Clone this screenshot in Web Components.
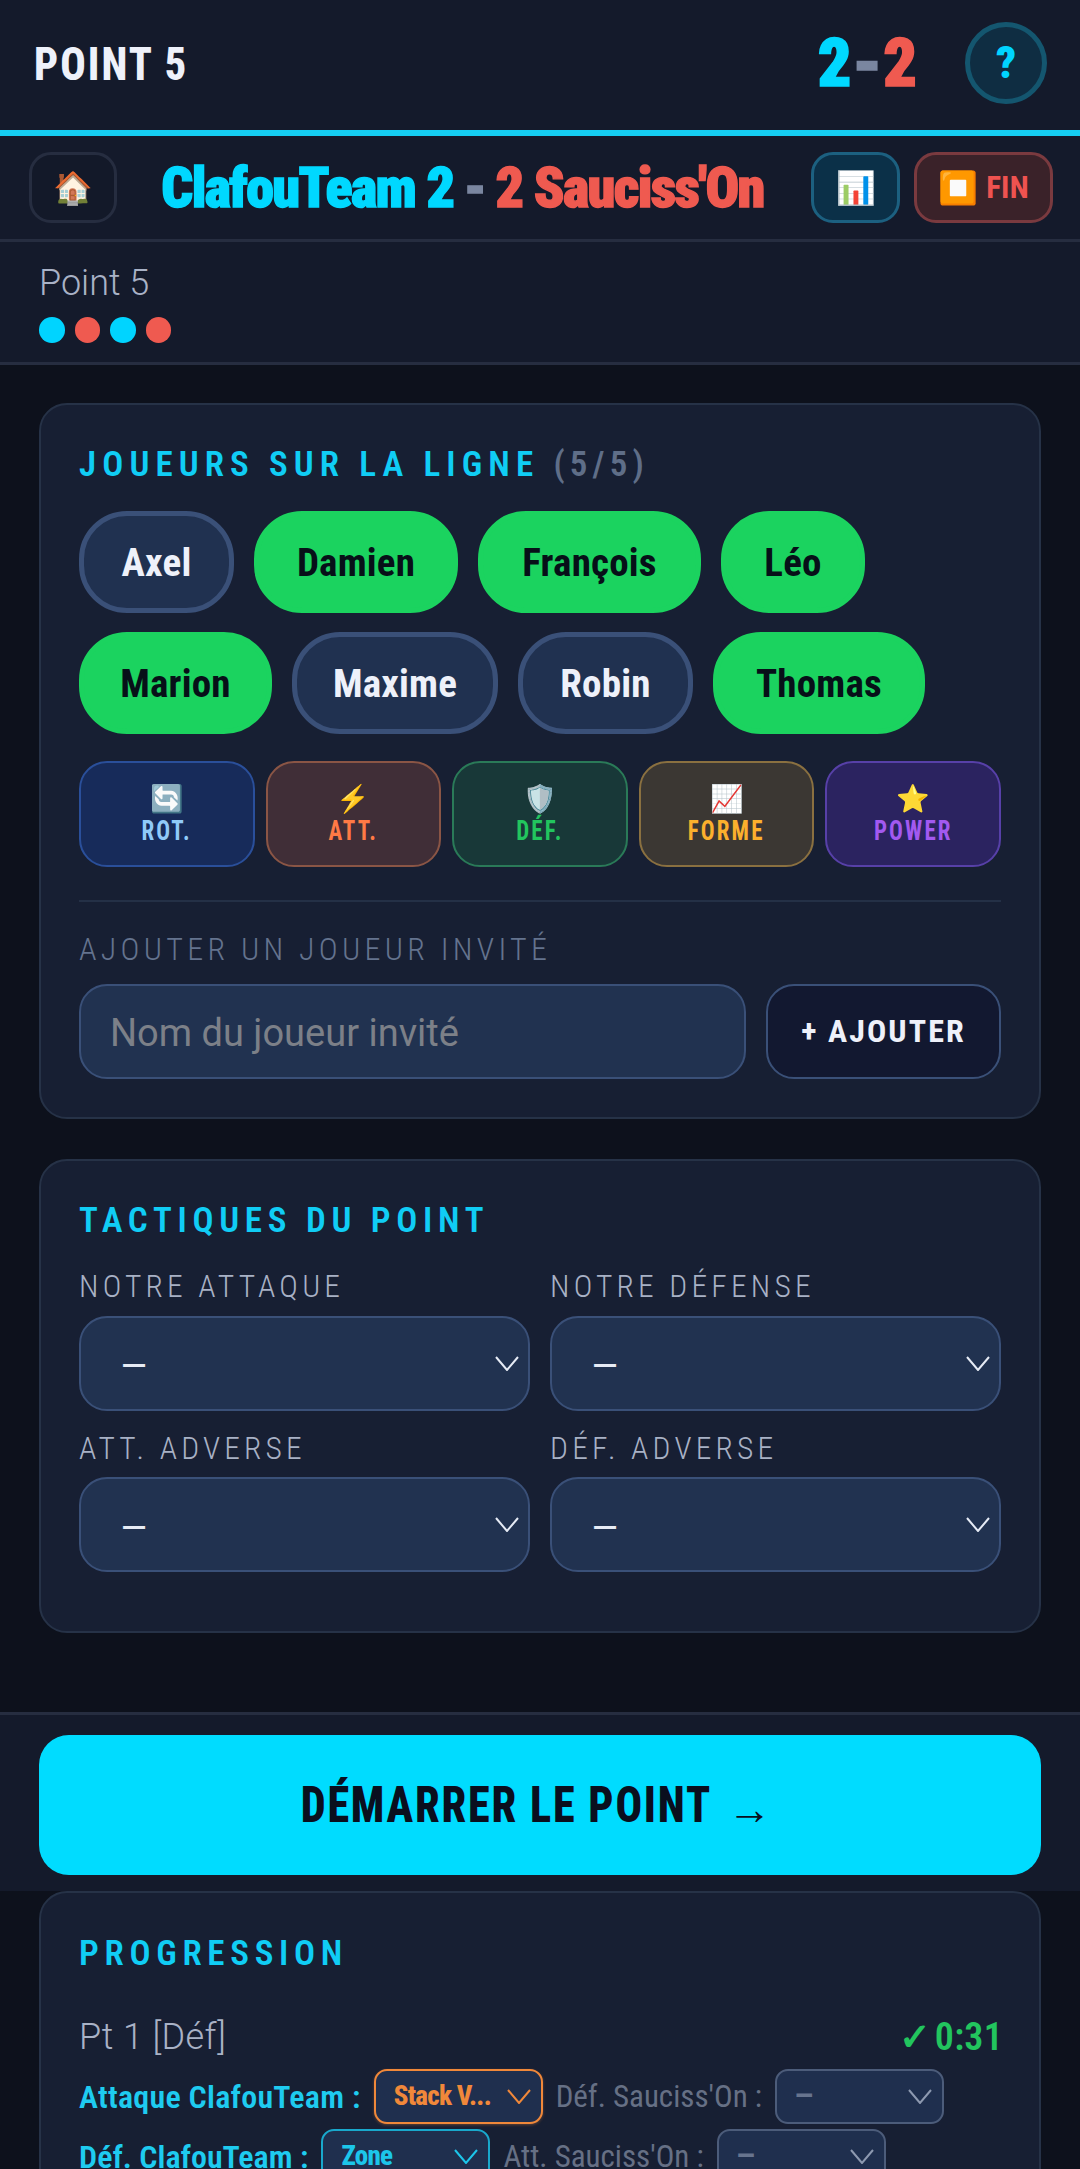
<!doctype html>
<html lang="fr"><head><meta charset="utf-8"><title>Point 5</title>
<style>
html,body{margin:0;padding:0;height:2169px;overflow:hidden;background:#0d111c}
body{font-family:Roboto,"Liberation Sans",sans-serif;color:#e8ecf8}
</style></head>
<body>
<match-page></match-page>
<script>
const chev='<svg width="24" height="15" viewBox="0 0 24 15" fill="none" stroke="currentColor" stroke-width="2" aria-hidden="true"><path d="M1 1l11 13L23 1"/></svg>';
function def(name,css,html){
  customElements.define(name,class extends HTMLElement{
    constructor(){super();this.attachShadow({mode:'open'}).innerHTML='<style>'+css+'</style>'+html;}
  });
}
def('top-bar',`:host{display:flex;align-items:center;justify-content:space-between;box-sizing:border-box;height:136px;padding:0 33px 5px 34px;background:#141a2b;border-bottom:6px solid #15cdf2}
.t{font:800 47px/1 Roboto;font-stretch:75%;letter-spacing:2.3px;color:#eef1fa;transform:scaleX(.9);transform-origin:left center;margin-top:2px}
.r{display:flex;align-items:center;gap:48px}
.s{font:900 66px/1 Roboto;font-stretch:86%;display:flex;align-items:center;margin-top:3px;-webkit-text-stroke:1.6px currentColor}
.a{color:#00d8ff}.b{color:#ef5a50}.m{color:#7a86a0;font-stretch:100%;margin:0 1px}
.q{box-sizing:border-box;width:82px;height:82px;border-radius:50%;border:5px solid #14566f;background:#0f2d42;color:#00d4ff;font:900 44px/1 Roboto;font-stretch:75%;display:flex;align-items:center;justify-content:center}`,
`<div class="t">POINT 5</div><div class="r"><div class="s"><span class="a">2</span><span class="m">-</span><span class="b">2</span></div><div class="q">?</div></div>`);

def('score-bar',`:host{display:flex;align-items:center;box-sizing:border-box;height:106px;padding:0 27px 0 29px;background:#141a2b;border-bottom:3px solid #262d40}
.i{box-sizing:border-box;height:71px;border-radius:22px;border:3px solid #262d40;display:flex;align-items:center;justify-content:center;font:32px/1 Roboto}
.h{width:88px;background:#131929}
.g{width:89px;background:#0b3048;border-color:#1c6080;margin-right:14px}
.f{width:139px;background:#3a2229;border-color:#7a3a3f;gap:8px;color:#ef5350;font:700 31px/1 Roboto;font-stretch:75%;letter-spacing:.2px}
.e{font:32px/1 Roboto;letter-spacing:0}
.c{flex:1;display:flex;justify-content:center;align-items:center;gap:10px;font:900 56px/1 Roboto;font-stretch:75%;letter-spacing:-1.6px;white-space:nowrap;padding-right:3px;-webkit-text-stroke:1.4px currentColor}
.a{color:#00d8ff}.b{color:#ef5a50}.m{color:#7a86a0}`,
`<div class="i h">🏠</div><div class="c"><span class="a">ClafouTeam 2</span><span class="m">-</span><span class="b">2 Sauciss'On</span></div><div class="i g">📊</div><div class="i f"><span class="e">⏹️</span><span>FIN</span></div>`);

def('point-info',`:host{display:block;box-sizing:border-box;height:123px;padding:22px 39px 0;background:#141a2b;border-bottom:3px solid #262d40}
.p{font:300 36px/38px Roboto;color:#a9b2c6;height:53px}
.d{display:flex;gap:10px}
i{display:block;width:25.5px;height:25.5px;border-radius:50%}
.a{background:#00d4ff}.b{background:#ef5a50}`,
`<div class="p">Point 5</div><div class="d"><i class="a"></i><i class="b"></i><i class="a"></i><i class="b"></i></div>`);

def('app-card',`:host{display:block;box-sizing:border-box;border:2px solid #263247;border-radius:28px;background:#171f33;padding:42px 38px 38px}`,
`<slot></slot>`);

def('card-title',`:host{display:block;font:600 35px/1 Roboto;font-stretch:75%;letter-spacing:5.7px;color:#10cdf5;margin-bottom:29px;white-space:nowrap}
::slotted(span){color:#5f6e88;letter-spacing:5.2px}`,`<slot></slot>`);

def('player-chip',`:host{display:inline-flex;align-items:center;justify-content:center;box-sizing:border-box;height:102px;padding:2px 0 0;border-radius:48px;border:5px solid #3a5078;background:#203150;color:#eef1fa;font:700 39px/1 Roboto;font-stretch:75%;letter-spacing:.2px;white-space:nowrap}
:host([on]){background:#1bd35f;border-color:#1bd35f;color:#071018}`,`<slot></slot>`);

def('stat-btn',`:host{display:flex;flex-direction:column;align-items:center;box-sizing:border-box;height:106px;border-radius:28px;border:2.5px solid var(--b);background:var(--g);color:var(--c);padding-top:20px}
.e{font:27px/32px Roboto;height:33px}
.l{font:700 27px/1 Roboto;font-stretch:75%;letter-spacing:2.5px;margin-top:2px;transform:scaleX(.85);white-space:nowrap}`,
`<div class="e"><slot name="e"></slot></div><div class="l"><slot></slot></div>`);

def('field-label',`:host{display:block;font:300 31.5px/1 Roboto;font-stretch:80%;letter-spacing:4.2px;color:#a8b1c5;white-space:nowrap}
:host([dim]){color:#64738e;font-size:32px;letter-spacing:4.3px}`,`<slot></slot>`);

def('select-box',`:host{display:flex;align-items:center;justify-content:space-between;box-sizing:border-box;height:95px;border:2px solid #3a5078;border-radius:28px;background:#213250;padding:8px 9px 0 39px;color:#e6ebf5;font:400 40px/1 Roboto;font-stretch:85%}
svg{margin-top:-8px;display:block}`,
`<span><slot></slot></span>`+chev);

def('text-box',`:host{display:flex;align-items:center;box-sizing:border-box;flex:1;height:95px;border:2px solid #3a5078;border-radius:28px;background:#213250;padding:3px 29px 0;color:#7c8088;font:400 38px/1 Roboto;white-space:nowrap}`,`<slot></slot>`);

def('ghost-btn',`:host{display:flex;align-items:center;justify-content:center;box-sizing:border-box;width:235px;height:95px;border:2px solid #3a5078;border-radius:28px;background:#121830;color:#eef1fa;font:700 32px/1 Roboto;font-stretch:75%;letter-spacing:2.1px;white-space:nowrap;padding-bottom:2px}`,`<slot></slot>`);

def('start-bar',`:host{display:block;box-sizing:border-box;height:179px;padding:20px 39px 0;background:#141a2b;border-top:3px solid #262d40}
.b{box-sizing:border-box;height:140px;border-radius:30px;background:#00dcff;color:#0a0f1e;display:flex;align-items:center;justify-content:center;padding-right:9px;font:800 50px/1 Roboto;font-stretch:75%;white-space:nowrap}
.t{letter-spacing:2px;transform:scaleX(.885);margin:0 -26px}
.ar{font:400 44px/1 Roboto;margin:8px 0 0 15px}`,
`<div class="b"><span class="t">DÉMARRER LE POINT</span><span class="ar">→</span></div>`);

def('mini-select',`:host{display:inline-flex;align-items:center;justify-content:space-between;box-sizing:border-box;width:169px;height:55px;border:2.5px solid #4c5c7a;border-radius:13px;background:#1f2f4e;padding:0 10px 0 18px;color:#67748e;font:800 27px/1 Roboto;font-stretch:75%;letter-spacing:-.7px;flex:none}
:host([o]){border-color:#f0883a;color:#f0883a;box-shadow:0 1px 3px #f0883a55}
:host([c]){border-color:#19a8cc;color:#1cc6ea}
svg{color:#8d99b0}:host([o]) svg{color:#f0883a}:host([c]) svg{color:#1cc6ea}`,
`<span><slot></slot></span>`+chev);

def('progress-row',`:host{display:flex;align-items:center;gap:13px;height:55px;margin-bottom:5px;white-space:nowrap;font:400 31px/1 Roboto;font-stretch:80%}
.l{color:#1ecbf0;font-weight:600;font-stretch:82%;font-size:32px}.g{color:#667085}`,
`<span class="l"><slot name="a"></slot></span><slot name="s1"></slot><span class="g"><slot name="b"></slot></span><slot name="s2"></slot>`);

def('point-head',`:host{display:flex;align-items:center;justify-content:space-between;font:300 36px/1 Roboto;font-stretch:88%;color:#a9b2c6;letter-spacing:.4px}
.v{color:#22c55e;font-weight:600;font-size:38px;font-stretch:80%;word-spacing:-5px;letter-spacing:.2px;margin-right:-2px}`,`<span><slot></slot></span><span class="v"><slot name="v"></slot></span>`);

def('match-page',`:host{display:block;height:2169px;overflow:hidden}
main{display:flex;flex-direction:column;gap:40px;padding:38px 39px 79px}
.chips{display:flex;flex-wrap:wrap;gap:19px 20px}
.stats{display:grid;grid-template-columns:repeat(5,1fr);gap:11px;margin-top:27px}
hr{border:0;height:2px;background:#243046;margin:33px 0 31px}
.add{display:flex;gap:20px;margin-top:19px}
.grid{display:grid;grid-template-columns:1fr 1fr;gap:0 20px;margin-bottom:-1px}
.f field-label{margin-bottom:13px}
.f{margin-bottom:22px}
.c3{margin:0 39px;padding-top:43px}
.c3 point-head{margin-bottom:13px}`,
`<top-bar></top-bar><score-bar></score-bar><point-info></point-info>
<main>
<app-card>
 <card-title style="letter-spacing:6.1px">JOUEURS SUR LA LIGNE <span>(5/5)</span></card-title>
 <div class="chips">
  <player-chip style="width:155px">Axel</player-chip><player-chip on style="width:204px">Damien</player-chip><player-chip on style="width:223px">François</player-chip><player-chip on style="width:144px">Léo</player-chip>
  <player-chip on style="width:193px">Marion</player-chip><player-chip style="width:206px">Maxime</player-chip><player-chip style="width:175px">Robin</player-chip><player-chip on style="width:212px">Thomas</player-chip>
 </div>
 <div class="stats">
  <stat-btn style="--g:#172b5a;--b:#2a4f9a;--c:#90caf9"><span slot="e">🔄</span>ROT.</stat-btn>
  <stat-btn style="--g:#402e37;--b:#8a5545;--c:#ff7a45"><span slot="e">⚡</span>ATT.</stat-btn>
  <stat-btn style="--g:#183838;--b:#2a7a58;--c:#22c55e"><span slot="e">🛡️</span>DÉF.</stat-btn>
  <stat-btn style="--g:#3b3733;--b:#8a7040;--c:#fbb02d"><span slot="e">📈</span>FORME</stat-btn>
  <stat-btn style="--g:#2b2360;--b:#5740a8;--c:#a259f0"><span slot="e">⭐</span>POWER</stat-btn>
 </div>
 <hr>
 <field-label dim>AJOUTER UN JOUEUR INVITÉ</field-label>
 <div class="add"><text-box>Nom du joueur invité</text-box><ghost-btn>+ AJOUTER</ghost-btn></div>
</app-card>
<app-card>
 <card-title style="margin-bottom:33px">TACTIQUES DU POINT</card-title>
 <div class="grid">
  <div class="f"><field-label>NOTRE ATTAQUE</field-label><select-box>—</select-box></div>
  <div class="f"><field-label>NOTRE DÉFENSE</field-label><select-box>—</select-box></div>
  <div class="f"><field-label>ATT. ADVERSE</field-label><select-box>—</select-box></div>
  <div class="f"><field-label>DÉF. ADVERSE</field-label><select-box>—</select-box></div>
 </div>
</app-card>
</main>
<start-bar></start-bar>
<app-card class="c3">
 <card-title style="margin-bottom:47px">PROGRESSION</card-title>
 <point-head>Pt 1 [Déf]<span slot="v">✓ 0:31</span></point-head>
 <progress-row><span slot="a" style="letter-spacing:.25px">Attaque ClafouTeam :</span><mini-select slot="s1" o>Stack V...</mini-select><span slot="b">Déf. Sauciss'On :</span><mini-select slot="s2">—</mini-select></progress-row>
 <progress-row><span slot="a">Déf. ClafouTeam :</span><mini-select slot="s1" c>Zone</mini-select><span slot="b">Att. Sauciss'On :</span><mini-select slot="s2">—</mini-select></progress-row>
</app-card>`);
</script>
</body></html>
